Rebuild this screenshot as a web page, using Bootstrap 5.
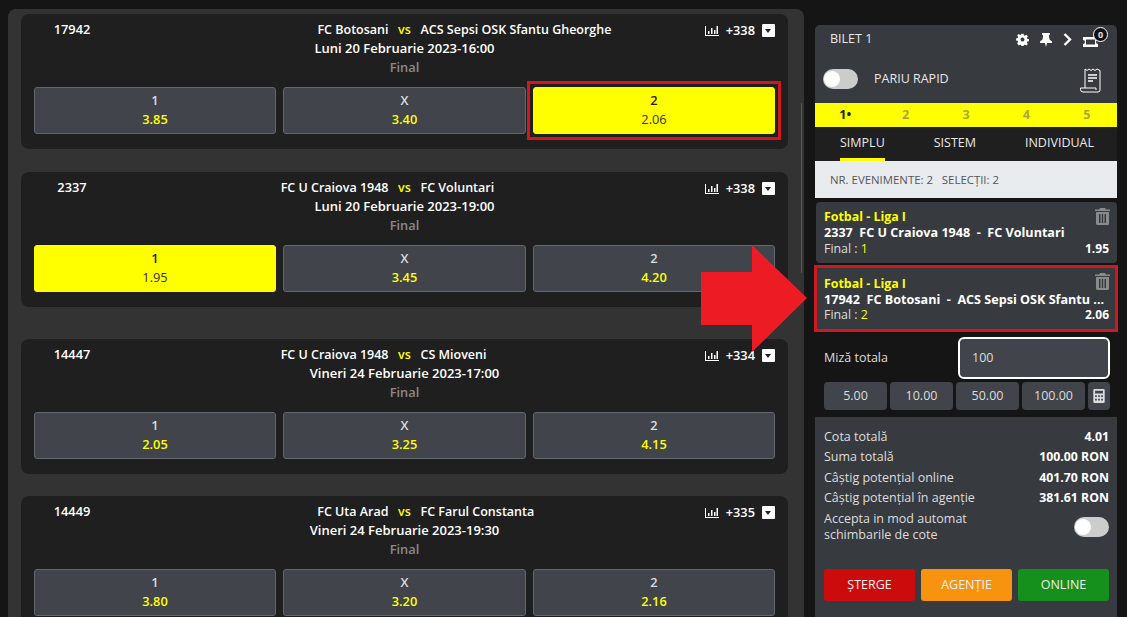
<!DOCTYPE html>
<html lang="ro">
<head>
  <meta charset="UTF-8">
  <meta name="viewport" content="width=device-width, initial-scale=1.0">
  <title>Bilet 1</title>
  <link href="https://cdn.jsdelivr.net/npm/bootstrap@5.3.0/dist/css/bootstrap.min.css" rel="stylesheet">
  <style>
    html, body { height: 617px; overflow: hidden; }
    body { background: #151515; color: #fff; font-family: "Open Sans", sans-serif; font-size: 12.5px; }
    .page-wrap { height: 617px; position: relative; }

    /* lista meciuri */
    .match-panel { width: 796px; margin: 9px 0 0 8px; padding: 5px 16px 0 13px; background: #333; border-radius: 8px 8px 0 0; height: 608px; flex: none; }
    .match-box { height: 135px; background: #201f20; border-radius: 8px; padding: 6px 13px 0; }
    .gap-a { margin-top: 23px; }
    .gap-b { margin-top: 32px; }
    .gap-c { margin-top: 22px; }
    .match-head { display: grid; grid-template-columns: 76px 1fr 76px; line-height: 19px; font-weight: 600; font-size: 12.8px; }
    .match-id { text-align: center; }
    .match-mid { text-align: center; }
    .match-date { font-size: 13px; }
    .team-line { display: grid; grid-template-columns: 1fr 32px 1fr; font-size: 12.5px; }
    .team-line .vs { color: #ff0; text-align: center; }
    .match-final { color: #8a8a8a; }
    .match-extra { gap: 7px; height: 19px; margin-top: 1px; }
    .down-box { width: 13px; height: 13px; background: #fff; border-radius: 1px; position: relative; }
    .down-box::after { content: ""; position: absolute; left: 3px; top: 5px; border: 3.5px solid transparent; border-top: 4px solid #222; border-bottom: 0; }
    .odds-row { display: grid; grid-template-columns: 242px 243px 242px; gap: 7px; margin-top: 10px; }
    .odd-btn { height: 47px; background: #41444a; border: 1px solid #63666b; border-radius: 3px; text-align: center; line-height: 19px; padding-top: 3px; font-weight: 600; font-size: 12.8px; color: #ddd; }
    .odd-btn b { display: block; font-weight: 600; color: #ff0; }
    .odd-btn.picked { background: #ff0; border-color: #ff0; color: #222; }
    .odd-btn.picked b { color: #333; font-weight: 500; }
    .red-mark { position: relative; }
    .red-mark::after { content: ""; position: absolute; inset: -7px; border: 3px solid #d2181f; }
    .scroll-thumb { position: absolute; left: 801px; top: 103px; width: 1px; height: 170px; background: #555; }
    .red-arrow { position: absolute; left: 701px; top: 245px; }

    /* bilet */
    .slip { width: 302px; margin: 25px 0 0 11px; flex: none; }
    .slip-top { background: #373a3f; height: 78px; border-radius: 5px 5px 0 0; }
    .slip-title { height: 29px; padding: 0 9px 0 15px; color: #e8e8e8; }
    .slip-tools { gap: 11px; }
    .ticket-wrap { position: relative; width: 25px; height: 14px; }
    .ticket-count { position: absolute; right: 0; top: -6px; width: 15px; height: 15px; border-radius: 50%; background: #111; border: 1px solid #fff; font-size: 9px; font-weight: 700; line-height: 13px; text-align: center; }
    .quick-row { padding: 15px 14px 0 8px; color: #e8e8e8; }
    .quick-row svg { margin-top: -1px; margin-bottom: -4px; }
    .switch-pill { width: 35px; height: 20px; border-radius: 10px; background: #ccc; position: relative; flex: none; }
    .switch-pill::after { content: ""; position: absolute; left: 1px; top: 2px; width: 16px; height: 16px; background: #fff; border-radius: 50%; }
    .num-strip { height: 24px; background: #ff0; color: #a8a840; font-weight: 700; }
    .num-strip span { flex: 1 1 0; text-align: center; line-height: 24px; }
    .num-strip .on { color: #222; }
    .tab-row { height: 34px; background: #201f20; color: #e8e8e8; padding: 0 23px 0 25px; }
    .tab-item { line-height: 31px; height: 34px; }
    .tab-item.on { border-bottom: 3px solid #ff0; }
    .count-bar { height: 37px; line-height: 37px; background: #e9ecef; color: #555; padding-left: 15px; margin-bottom: 4px; font-size: 11.4px; }
    .bet-item { height: 61px; background: #373a3f; border-radius: 4px; padding: 7px 8px 0; margin-left: 1px; line-height: 16px; position: relative; font-size: 12.4px; }
    .bet-item.marked { height: 67px; margin: 2px -1px 0 -1px; padding: 8px 6px 0 7px; border: 3px solid #d2181f; border-radius: 0; line-height: 15.6px; }
    .bet-item.marked .bin-icon { right: 5px; top: 5px; }
    .bet-sport { color: #ff0; font-weight: 700; }
    .bet-name { font-weight: 700; font-size: 12.6px; white-space: nowrap; }
    .bet-sel { color: #ddd; }
    .bet-sel i { color: #ff0; font-style: normal; }
    .bet-odd { font-weight: 700; font-size: 12px; }
    .bin-icon { position: absolute; right: 7px; top: 6px; }
    .stake-row { padding: 5px 7px 0 9px; }
    .stake-row label { color: #ddd; }
    .stake-input { width: 152px; height: 42px; background: #41444a; color: #ddd; border: 2px solid #fff; border-radius: 6px; padding: 0 12px; line-height: 38px; }
    .chips { padding: 3px 7px 0 9px; gap: 3px; }
    .chip { width: 63px; height: 28px; background: #41444a; color: #ddd; border-radius: 4px; text-align: center; line-height: 28px; }
    .chip.calc { width: 22px; padding-top: 7px; line-height: 0; }
    .summary { margin-top: 7px; height: 210px; background: #373a3f; padding: 10px 8px 0 9px; color: #ddd; line-height: 20.4px; }
    .summary b { color: #fff; font-weight: 700; font-size: 12.3px; }
    .auto-row { line-height: 16px; margin-top: 2px; }
    .act-row { gap: 6px; margin-top: 26px; }
    .act-btn { flex: 1 1 0; height: 32px; border-radius: 3px; text-align: center; color: #eee; line-height: 32px; }
    .act-del { background: #cc0c0c; }
    .act-ag { background: #f7930e; }
    .act-on { background: #16901c; }
  </style>
</head>
<body>
  <div class="page-wrap d-flex">

    <div class="match-panel">
      <div class="match-box">
        <div class="match-head">
          <div class="match-id">17942</div>
          <div class="match-mid">
            <div class="team-line"><span class="text-end">FC Botosani</span><span class="vs">vs</span><span class="text-start">ACS Sepsi OSK Sfantu Gheorghe</span></div>
            <div class="match-date">Luni 20 Februarie 2023-16:00</div>
            <div class="match-final">Final</div>
          </div>
          <div class="match-extra d-flex justify-content-end align-items-center">
            <svg width="14" height="10" viewBox="0 0 14 10" fill="#fff"><path d="M0 0h1v9h13v1H0z"/><path d="M3 5h1.500v3H3zM6 2h1.500v6H6zM9 4h1.500v4H9zM11.500 0H13v8h-1.500z"/></svg>
            <span>+338</span><span class="down-box"></span>
          </div>
        </div>
        <div class="odds-row">
          <div class="odd-btn">1<b>3.85</b></div>
          <div class="odd-btn">X<b>3.40</b></div>
          <div class="odd-btn picked red-mark">2<b>2.06</b></div>
        </div>
      </div>

      <div class="match-box gap-a">
        <div class="match-head">
          <div class="match-id">2337</div>
          <div class="match-mid">
            <div class="team-line"><span class="text-end">FC U Craiova 1948</span><span class="vs">vs</span><span class="text-start">FC Voluntari</span></div>
            <div class="match-date">Luni 20 Februarie 2023-19:00</div>
            <div class="match-final">Final</div>
          </div>
          <div class="match-extra d-flex justify-content-end align-items-center">
            <svg width="14" height="10" viewBox="0 0 14 10" fill="#fff"><path d="M0 0h1v9h13v1H0z"/><path d="M3 5h1.500v3H3zM6 2h1.500v6H6zM9 4h1.500v4H9zM11.500 0H13v8h-1.500z"/></svg>
            <span>+338</span><span class="down-box"></span>
          </div>
        </div>
        <div class="odds-row">
          <div class="odd-btn picked">1<b>1.95</b></div>
          <div class="odd-btn">X<b>3.45</b></div>
          <div class="odd-btn">2<b>4.20</b></div>
        </div>
      </div>

      <div class="match-box gap-b">
        <div class="match-head">
          <div class="match-id">14447</div>
          <div class="match-mid">
            <div class="team-line"><span class="text-end">FC U Craiova 1948</span><span class="vs">vs</span><span class="text-start">CS Mioveni</span></div>
            <div class="match-date">Vineri 24 Februarie 2023-17:00</div>
            <div class="match-final">Final</div>
          </div>
          <div class="match-extra d-flex justify-content-end align-items-center">
            <svg width="14" height="10" viewBox="0 0 14 10" fill="#fff"><path d="M0 0h1v9h13v1H0z"/><path d="M3 5h1.500v3H3zM6 2h1.500v6H6zM9 4h1.500v4H9zM11.500 0H13v8h-1.500z"/></svg>
            <span>+334</span><span class="down-box"></span>
          </div>
        </div>
        <div class="odds-row">
          <div class="odd-btn">1<b>2.05</b></div>
          <div class="odd-btn">X<b>3.25</b></div>
          <div class="odd-btn">2<b>4.15</b></div>
        </div>
      </div>

      <div class="match-box gap-c">
        <div class="match-head">
          <div class="match-id">14449</div>
          <div class="match-mid">
            <div class="team-line"><span class="text-end">FC Uta Arad</span><span class="vs">vs</span><span class="text-start">FC Farul Constanta</span></div>
            <div class="match-date">Vineri 24 Februarie 2023-19:30</div>
            <div class="match-final">Final</div>
          </div>
          <div class="match-extra d-flex justify-content-end align-items-center">
            <svg width="14" height="10" viewBox="0 0 14 10" fill="#fff"><path d="M0 0h1v9h13v1H0z"/><path d="M3 5h1.500v3H3zM6 2h1.500v6H6zM9 4h1.500v4H9zM11.500 0H13v8h-1.500z"/></svg>
            <span>+335</span><span class="down-box"></span>
          </div>
        </div>
        <div class="odds-row">
          <div class="odd-btn">1<b>3.80</b></div>
          <div class="odd-btn">X<b>3.20</b></div>
          <div class="odd-btn">2<b>2.16</b></div>
        </div>
      </div>
    </div>

    <div class="slip">
      <div class="slip-top">
        <div class="slip-title d-flex justify-content-between align-items-center">
          <span>BILET 1</span>
          <div class="slip-tools d-flex align-items-center">
            <svg width="13" height="13" viewBox="-1 0 18 16" fill="#fff"><path fill-rule="evenodd" d="M6.500 0h3l.4 2.200 1.500.6 1.900-1.300 2.100 2.100-1.300 1.900.6 1.500 2.300.5v3l-2.300.4-.6 1.500 1.300 1.900-2.100 2.100-1.900-1.300-1.500.6-.4 2.200h-3l-.4-2.200-1.500-.6-1.900 1.300L.6 13.300l1.300-1.900-.6-1.500L-.9 9.500v-3l2.200-.5.6-1.500L.6 2.600l2.100-2.100 1.900 1.300 1.500-.6zM8 5.200a2.800 2.800 0 1 0 0 5.600 2.800 2.800 0 0 0 0-5.600z"/></svg>
            <svg width="12" height="14" viewBox="0 0 12 14" fill="#fff"><path d="M2 0h8v1.500L8.800 2.500 9.500 6.500 12 8.500V10H7L6 14 5 10H0V8.500l2.500-2L3.200 2.500 2 1.500z"/></svg>
            <svg width="9" height="13" viewBox="0 0 9 13" fill="none" stroke="#fff" stroke-width="2.400"><path d="M1.500 1l5.500 5.500-5.500 5.500"/></svg>
            <div class="ticket-wrap">
              <svg class="d-block mt-1" width="15" height="10" viewBox="0 0 15 10"><path fill="#fff" fill-rule="evenodd" d="M0 0h15v3a2 2 0 0 0 0 4v3H0V7a2 2 0 0 0 0-4zM3 2.500v5h9v-5z"/></svg>
              <span class="ticket-count">0</span>
            </div>
          </div>
        </div>
        <div class="quick-row d-flex align-items-center">
          <span class="switch-pill"></span>
          <span class="ms-3 flex-grow-1">PARIU RAPID</span>
          <svg width="23" height="25" viewBox="0 0 23 25" fill="none" stroke="#fff" stroke-width="1"><path d="M5 20V1l2 1.500L9 1l2 1.500L13 1l2 1.500L17 1l3 1.500V22a2 2 0 0 1-2 2H3a2.500 2.500 0 0 1-2.500-2.500V20H16v2"/><path d="M8 7h9M8 10h9M8 13h5" stroke-width="1.300"/></svg>
        </div>
      </div>
      <div class="num-strip d-flex">
        <span class="on">1•</span><span>2</span><span>3</span><span>4</span><span>5</span>
      </div>
      <div class="tab-row d-flex justify-content-between">
        <span class="tab-item on">SIMPLU</span>
        <span class="tab-item">SISTEM</span>
        <span class="tab-item">INDIVIDUAL</span>
      </div>
      <div class="count-bar">NR. EVENIMENTE: 2 &nbsp; SELECȚII: 2</div>

      <div class="bet-item">
        <svg class="bin-icon" width="15" height="17" viewBox="0 0 15 17" fill="#8a8a8a"><path fill-rule="evenodd" d="M5 0h5l1 1.500h4V3H0V1.500h4zM1 4h13v11.500a1.500 1.500 0 0 1-1.500 1.500h-10A1.500 1.500 0 0 1 1 15.500zM4 6v9h1.500V6zM6.800 6v9h1.400V6zM9.500 6v9H11V6z"/></svg>
        <div class="bet-sport">Fotbal - Liga I</div>
        <div class="bet-name">2337&nbsp; FC U Craiova 1948 &nbsp;-&nbsp; FC Voluntari</div>
        <div class="d-flex justify-content-between"><span class="bet-sel">Final : <i>1</i></span><span class="bet-odd">1.95</span></div>
      </div>
      <div class="bet-item marked">
        <svg class="bin-icon" width="15" height="17" viewBox="0 0 15 17" fill="#8a8a8a"><path fill-rule="evenodd" d="M5 0h5l1 1.500h4V3H0V1.500h4zM1 4h13v11.500a1.500 1.500 0 0 1-1.500 1.500h-10A1.500 1.500 0 0 1 1 15.500zM4 6v9h1.500V6zM6.800 6v9h1.400V6zM9.500 6v9H11V6z"/></svg>
        <div class="bet-sport">Fotbal - Liga I</div>
        <div class="bet-name">17942&nbsp; FC Botosani &nbsp;-&nbsp; ACS Sepsi OSK Sfantu ...</div>
        <div class="d-flex justify-content-between"><span class="bet-sel">Final : <i>2</i></span><span class="bet-odd">2.06</span></div>
      </div>

      <div class="stake-row d-flex justify-content-between align-items-center">
        <label>Miză totala</label>
        <div class="stake-input">100</div>
      </div>
      <div class="chips d-flex">
        <div class="chip">5.00</div>
        <div class="chip">10.00</div>
        <div class="chip">50.00</div>
        <div class="chip">100.00</div>
        <div class="chip calc">
          <svg width="12" height="14" viewBox="0 0 13 16" fill="#ddd"><path fill-rule="evenodd" d="M1.500 0h10A1.500 1.500 0 0 1 13 1.500v13a1.500 1.500 0 0 1-1.500 1.500h-10A1.500 1.500 0 0 1 0 14.500v-13A1.500 1.500 0 0 1 1.500 0zM2 2v3h9V2zM2 7v2h2V7zM5.500 7v2h2V7zM9 7v2h2V7zM2 11v2h2v-2zM5.500 11v2h2v-2zM9 11v2h2v-2z"/></svg>
        </div>
      </div>

      <div class="summary">
        <div class="d-flex justify-content-between"><span>Cota totală</span><b>4.01</b></div>
        <div class="d-flex justify-content-between"><span>Suma totală</span><b>100.00 RON</b></div>
        <div class="d-flex justify-content-between"><span>Câștig potențial online</span><b>401.70 RON</b></div>
        <div class="d-flex justify-content-between"><span>Câștig potențial în agenție</span><b>381.61 RON</b></div>
        <div class="auto-row d-flex justify-content-between align-items-center">
          <span>Accepta in mod automat<br>schimbarile de cote</span>
          <span class="switch-pill"></span>
        </div>
        <div class="act-row d-flex">
          <div class="act-btn act-del">ȘTERGE</div>
          <div class="act-btn act-ag">AGENŢIE</div>
          <div class="act-btn act-on">ONLINE</div>
        </div>
      </div>
    </div>

    <div class="scroll-thumb"></div>
    <svg class="red-arrow" width="106" height="107" viewBox="0 0 106 107"><path fill="#ed1c24" d="M0 27h51V0l55 53-55 54V80H0z"/></svg>
  </div>

  <script src="https://cdn.jsdelivr.net/npm/bootstrap@5.3.0/dist/js/bootstrap.bundle.min.js"></script>
</body>
</html>
